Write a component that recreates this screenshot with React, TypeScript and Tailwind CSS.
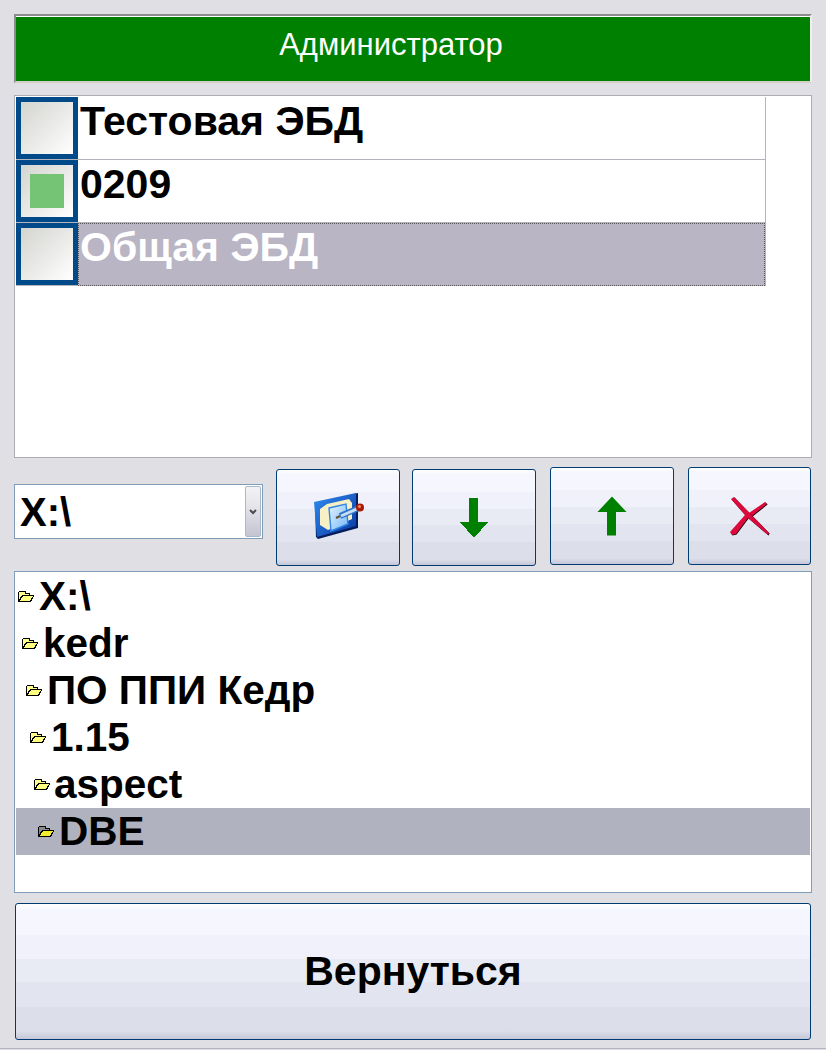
const font = "font-['Liberation_Sans',Arial,sans-serif]";

const btnClass =
  "flex items-center justify-center rounded-[3px] border border-[#003c74] bg-[linear-gradient(to_bottom,#ffffff_0%,#f5f6fe_5%,#f5f6fe_23%,#f0f1fb_23%,#f0f1fb_41%,#e8ebf4_41%,#e8ebf4_58%,#e2e4ef_58%,#e2e4ef_76%,#dcdfea_76%,#dcdfea_94%,#c6c6d8_100%)]";

function FolderIcon({ selected }: { selected?: boolean }) {
  return (
    <svg width="16" height="13" viewBox="0 0 16 13" shapeRendering="crispEdges" className="shrink-0">
      <path d="M0 12V2L1 1H7L8 2V3H12V5H15L16 6L13 12Z" fill="#000" />
      <path d="M1 10V2H7V4H11V5H4L1 10Z" fill={selected ? "#8a8a8a" : "#ffff90"} />
      <path d="M2 11L5 6H15L12 11Z" fill={selected ? "#f4ee30" : "#ffff80"} />
    </svg>
  );
}

function CheckBox({ checked }: { checked?: boolean }) {
  return (
    <div className="flex h-[62px] w-[62px] shrink-0 items-center justify-center border-[5px] border-[#004a8a]">
      <div className="flex h-[52px] w-[52px] items-center justify-center bg-[linear-gradient(135deg,#d3d5d0,#ffffff)]">
        {checked && <div className="h-[34px] w-[34px] bg-[#75c475]" />}
      </div>
    </div>
  );
}

const treeRows = [
  { label: "X:\\", pad: "pl-[2px]", gap: "gap-[5px]" },
  { label: "kedr", pad: "pl-[6px]", gap: "gap-[5px]" },
  { label: "ПО ППИ Кедр", pad: "pl-[10px]", gap: "gap-[5px]" },
  { label: "1.15", pad: "pl-[14px]", gap: "gap-[5px]" },
  { label: "aspect", pad: "pl-[18px]", gap: "gap-[4px]" },
  { label: "DBE", pad: "pl-[22px]", gap: "gap-[5px]", selected: true },
];

export default function App() {
  return (
    <div className={`${font} flex h-[1050px] w-[826px] flex-col overflow-hidden bg-[#e0dfe3] pl-[14px] pr-[14px] pt-[14px] text-black`}>
      {/* header */}
      <div className="h-[69px] w-[798px] shrink-0 border-2 border-b-[#d4d0c8] border-l-[#8c8c8c] border-r-[#f0efec] border-t-[#8c8c8c]">
        <div className="flex h-full w-full items-center justify-center border-t border-white bg-[#008000] pb-[8px] pr-[44px] text-[31px] text-white">
          Администратор
        </div>
      </div>

      {/* list */}
      <div className="mt-[12px] h-[363px] w-[798px] shrink-0 border border-[#acacb4] bg-white p-px">
        {["Тестовая ЭБД", "0209", "Общая ЭБД"].map((name, i) => (
          <div key={name} className="flex h-[63px] w-[750px] border-b border-r border-[#b4b4bc]">
            <CheckBox checked={i === 1} />
            {i === 2 ? (
              <div className="mb-[-1px] flex-1 border border-dotted border-[#555] bg-[#b9b5c5] pl-[1px] text-[41px] font-bold leading-[46px] text-white">
                {name}
              </div>
            ) : (
              <div className="flex-1 pl-[2px] text-[41px] font-bold leading-[48px]">{name}</div>
            )}
          </div>
        ))}
      </div>

      {/* toolbar */}
      <div className="mt-[9px] flex h-[104px] w-[798px] shrink-0 items-start">
        <div className="mt-[17px] flex h-[55px] w-[249px] shrink-0 border border-[#7f9db9] bg-white p-px">
          <div className="flex-1 pl-[4px] text-[40px] font-bold leading-[52px]">X:\</div>
          <div className="flex w-[16px] items-center justify-center rounded-[2px] border border-[#a9b9cc] bg-[linear-gradient(to_bottom,#f3f3f6,#e4e4ea_40%,#c4c4d2)]">
            <svg width="8" height="6" viewBox="0 0 8 6">
              <path d="M1 1L4 4L7 1" fill="none" stroke="#4d4d4d" strokeWidth="2" />
            </svg>
          </div>
        </div>

        <button className={`${btnClass} ml-[13px] mt-[2px] h-[97px] w-[124px] shrink-0`}>
          <svg width="50" height="46" viewBox="0 0 50 46" className="translate-x-[1px] -translate-y-[2px]">
            <defs>
              <linearGradient id="panel" x1="0" y1="0" x2="1" y2="1">
                <stop offset="0" stopColor="#2f8cf0" />
                <stop offset="1" stopColor="#0a36a0" />
              </linearGradient>
              <linearGradient id="page" x1="0" y1="0" x2="1" y2="1">
                <stop offset="0" stopColor="#e4f3ff" />
                <stop offset="1" stopColor="#74b8f8" />
              </linearGradient>
            </defs>
            <path d="M1 10L44 0V35L4 46L2 44Z" fill="#021c5c" />
            <path d="M0 9L42 0V33L3 44Z" fill="url(#panel)" />
            <path d="M13 11L35 6L38 10V26L14 37L6 32V16Z" fill="#f8efc4" />
            <path d="M15 15L32 11L34 31L17 38Z" fill="url(#page)" stroke="#2f86e6" strokeWidth="1.4" />
            <path d="M26 23L45 15" stroke="#2f74c4" strokeWidth="6" />
            <path d="M27 23L44 15.5" stroke="#c4def6" strokeWidth="3" />
            <path d="M26 23L22 25" stroke="#665533" strokeWidth="2.4" />
            <circle cx="46" cy="14.5" r="4" fill="#a81a0a" />
            <circle cx="45.5" cy="13.5" r="1.5" fill="#ff8a55" />
          </svg>
        </button>

        <button className={`${btnClass} ml-[12px] mt-[2px] h-[97px] w-[124px] shrink-0`}>
          <svg width="30" height="40" viewBox="0 0 30 40" shapeRendering="crispEdges">
            <path d="M10 0H19V24H29.5L15 39.5L0.5 24H10Z" fill="#008000" />
          </svg>
        </button>

        <button className={`${btnClass} ml-[14px] h-[98px] w-[124px] shrink-0`}>
          <svg width="30" height="40" viewBox="0 0 30 40">
            <path d="M10 39.5H19V16H29.5L15 0.5L0.5 16H10Z" fill="#008000" />
          </svg>
        </button>

        <button className={`${btnClass} ml-[14px] h-[98px] w-[123px] shrink-0`}>
          <svg width="40" height="40" viewBox="0 0 40 40">
            <path d="M1 3L4 1L39 37L38 39L18 22L6 38L2 39L0 36L15 19Z" fill="#000" transform="translate(0.6,0.6)" />
            <path d="M1 3L4 1L39 37L38 39L18 22L6 38L2 39L0 36L15 19Z" fill="#dc0a3c" />
            <path d="M35 6L37 8L22 20L19 17Z" fill="#000" transform="translate(0.6,0.6)" />
            <path d="M35 6L37 8L22 20L19 17Z" fill="#dc0a3c" />
          </svg>
        </button>
      </div>

      {/* tree */}
      <div className="h-[322px] w-[798px] shrink-0 border border-[#7f9db9] bg-white p-px">
        {treeRows.map((row) => (
          <div
            key={row.label}
            className={`flex h-[47px] items-center ${row.pad} ${row.gap} text-[40.5px] font-bold ${row.selected ? "bg-[#b0b3bf]" : ""}`}
          >
            <FolderIcon selected={row.selected} />
            <span>{row.label}</span>
          </div>
        ))}
      </div>

      {/* back */}
      <button className={`${btnClass} ml-px mt-[10px] h-[137px] w-[796px] shrink-0 text-[41px] font-bold`}>
        Вернуться
      </button>
      <div className="mt-[8px] h-px w-[826px] shrink-0 -translate-x-[14px] bg-[#b4b4c4]" />
    </div>
  );
}
